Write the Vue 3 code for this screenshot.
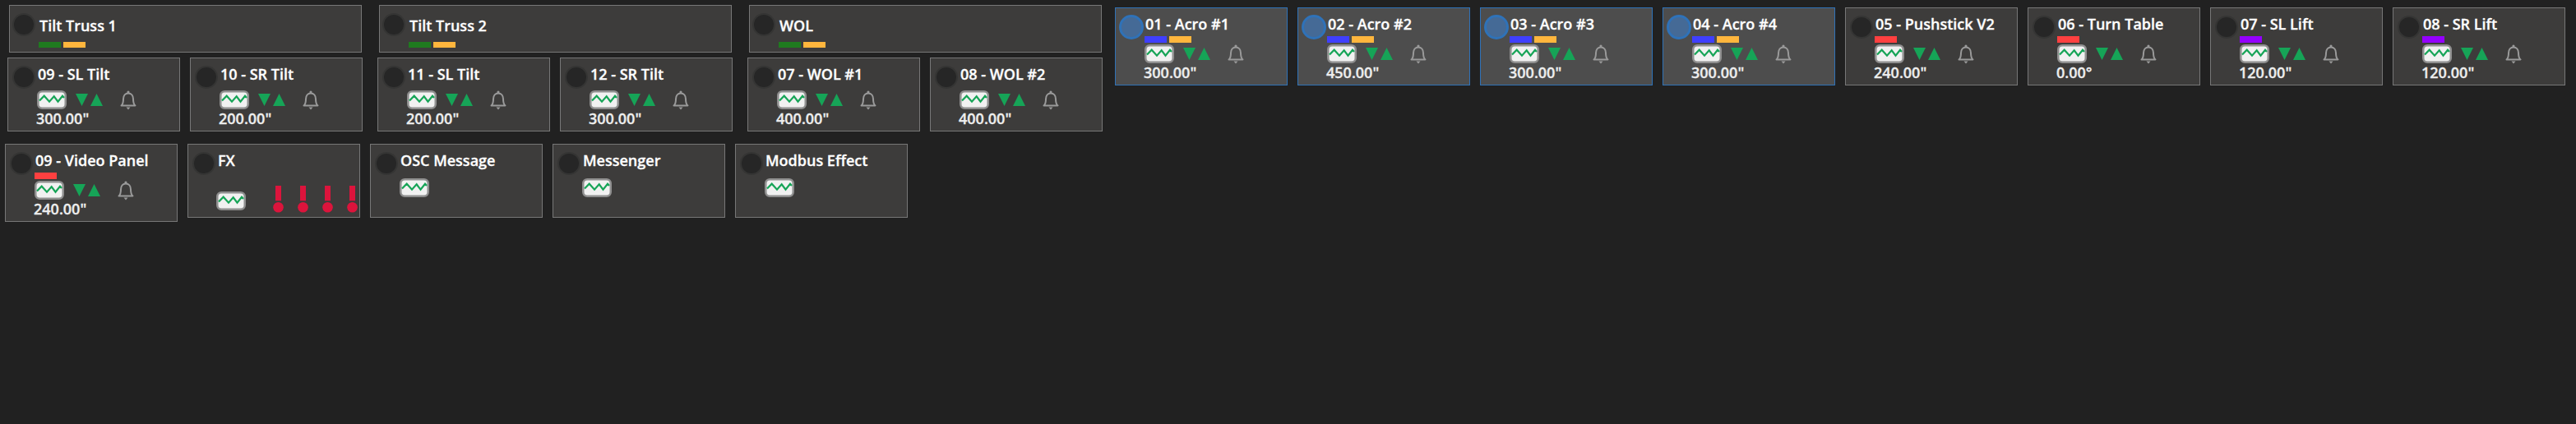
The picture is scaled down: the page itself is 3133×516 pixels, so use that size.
<template>
  <div class="board">
    <div class="row row--top">
      <div v-for="group in groups" :key="group.title" class="group">
        <FixtureCard class="card--wide" :item="group" />
        <div class="group__children">
          <FixtureCard v-for="child in group.children" :key="child.title" :item="child" />
        </div>
      </div>
      <div class="singles">
        <FixtureCard v-for="item in singles" :key="item.title" class="card--tall" :item="item" />
      </div>
    </div>
    <div class="row row--bottom">
      <FixtureCard v-for="item in effects" :key="item.title" :item="item" />
    </div>
  </div>
</template>

<script setup>
import { h } from 'vue'

const GREEN = '#1f7a1f'
const AMBER = '#ffb63d'
const BLUE = '#3f3fff'
const RED = '#ff4040'
const PURPLE = '#9400ff'

const motor = (title, value, tags = []) => ({ title, value, tags, controls: true })

const groups = [
  {
    title: 'Tilt Truss 1',
    tags: [GREEN, AMBER],
    children: [motor('09 - SL Tilt', '300.00"'), motor('10 - SR Tilt', '200.00"')],
  },
  {
    title: 'Tilt Truss 2',
    tags: [GREEN, AMBER],
    children: [motor('11 - SL Tilt', '200.00"'), motor('12 - SR Tilt', '300.00"')],
  },
  {
    title: 'WOL',
    tags: [GREEN, AMBER],
    children: [motor('07 - WOL #1', '400.00"'), motor('08 - WOL #2', '400.00"')],
  },
]

const singles = [
  { ...motor('01 - Acro #1', '300.00"', [BLUE, AMBER]), active: true },
  { ...motor('02 - Acro #2', '450.00"', [BLUE, AMBER]), active: true },
  { ...motor('03 - Acro #3', '300.00"', [BLUE, AMBER]), active: true },
  { ...motor('04 - Acro #4', '300.00"', [BLUE, AMBER]), active: true },
  motor('05 - Pushstick V2', '240.00"', [RED]),
  motor('06 - Turn Table', '0.00°', [RED]),
  motor('07 - SL Lift', '120.00"', [PURPLE]),
  motor('08 - SR Lift', '120.00"', [PURPLE]),
]

const effects = [
  motor('09 - Video Panel', '240.00"', [RED]),
  { title: 'FX', wave: true, alerts: 4 },
  { title: 'OSC Message', wave: true },
  { title: 'Messenger', wave: true },
  { title: 'Modbus Effect', wave: true },
]

// ── 图标 ──
const svg = (cls, w, hgt, children) =>
  h('svg', { class: cls, width: w, height: hgt, viewBox: `0 0 ${w} ${hgt}` }, children)

function WaveIcon() {
  return svg('wave', 36, 23, [
    h('rect', { x: 1.25, y: 1.25, width: 33.5, height: 20.5, rx: 5, fill: '#f1f1f1', stroke: '#8f8f8f', 'stroke-width': 2.5 }),
    h('path', {
      d: 'M3 12.5 L8.7 6.7 L15 13.7 L20.7 7.3 L25.5 13.7 L31 6.7 L33 9',
      fill: 'none',
      stroke: '#16a457',
      'stroke-width': 2.2,
    }),
  ])
}

function JogIcon() {
  return svg('jog', 34, 15, [
    h('path', { d: 'M0 0 H15 L7.5 15 Z', fill: '#16a457' }),
    h('path', { d: 'M18 15 H33 L25.5 0 Z', fill: '#16a457' }),
  ])
}

function BellIcon() {
  return svg('bell', 20, 24, [
    h('path', {
      d: 'M1.5 18.5 C4 16.5 4 14 4 10.5 C4 6.5 6.5 3.5 10 3.5 C13.5 3.5 16 6.5 16 10.5 C16 14 16 16.5 18.5 18.5 Z',
      fill: 'none',
      stroke: '#9a9a9a',
      'stroke-width': 2,
      'stroke-linejoin': 'round',
    }),
    h('circle', { cx: 10, cy: 2, r: 1.6, fill: '#9a9a9a' }),
    h('path', { d: 'M7.5 20.5 H12.5 L10 23.5 Z', fill: '#9a9a9a' }),
  ])
}

function AlertIcon() {
  return svg('alert', 13, 33, [
    h('rect', { x: 3, y: 0, width: 7, height: 18.3, fill: '#dc143c' }),
    h('circle', { cx: 6.5, cy: 26.2, r: 6.3, fill: '#dc143c' }),
  ])
}

// ── 卡片 ──
function FixtureCard(props) {
  const { item } = props
  const tags = (item.tags || []).map((color) =>
    h('span', { class: 'tag', style: { background: color } }),
  )
  const body = [
    h('span', { class: 'card__lamp' }),
    h('div', { class: 'card__title' }, item.title),
  ]
  if (tags.length) body.push(h('div', { class: 'card__tags' }, tags))
  if (item.controls) {
    body.push(
      h('div', { class: 'card__controls' }, [h(WaveIcon), h(JogIcon), h(BellIcon)]),
      h('div', { class: 'card__value' }, item.value),
    )
  } else if (item.wave) {
    const alerts = Array.from({ length: item.alerts || 0 }, () => h(AlertIcon))
    body.push(
      h('div', { class: ['card__status', { 'card__status--alerts': item.alerts }] }, [
        h(WaveIcon),
        ...alerts,
      ]),
    )
  }
  return h('div', { class: ['card', { 'card--active': item.active }] }, body)
}
FixtureCard.props = ['item']
</script>

<style>
html,
body {
  background: #212121;
}
</style>

<style scoped>
.board {
  width: 3133px;
  height: 516px;
  background: #212121;
  box-sizing: border-box;
  overflow: hidden;
  padding-top: 6px;
}

.row {
  display: flex;
  align-items: flex-start;
}

.row--top {
  padding-left: 9px;
  gap: 18px;
}

.row--bottom {
  margin-top: 15px;
  padding-left: 6px;
  gap: 12px;
}

.group {
  width: 432px;
  display: flex;
  flex-direction: column;
  gap: 6px;
}

.group__children {
  display: flex;
  gap: 12px;
}

.singles {
  display: flex;
  gap: 12px;
  margin-left: -3px;
  margin-top: 3px;
}

:deep(.card) {
  position: relative;
  box-sizing: border-box;
  width: 210px;
  height: 90px;
  padding: 7px 0 0 35px;
  background: #3d3c3b;
  border: 1px solid #777;
  font-family: 'Open Sans', 'Noto Sans', sans-serif;
  color: #fff;
}

:deep(.card--wide) {
  width: 429px;
  height: 58px;
  margin-left: 2px;
  padding-top: 12px;
}

:deep(.card--tall) {
  height: 95px;
}

.row--bottom :deep(.card:first-child) {
  height: 95px;
}

:deep(.card--active) {
  background: #4d4d4d;
  border-color: #2f72b8;
}

:deep(.card__lamp) {
  position: absolute;
  left: 7px;
  top: 11px;
  width: 24px;
  height: 24px;
  border-radius: 50%;
  background: #262626;
  box-shadow: 0 0 0 2px #353534;
}

:deep(.card--wide .card__lamp) {
  left: 5px;
}

:deep(.card--active .card__lamp) {
  left: 4px;
  top: 8px;
  background: #456a96;
  box-shadow: none;
  border: 3px solid #2f72b8;
}

:deep(.card__title) {
  font-size: 18px;
  font-weight: 600;
  line-height: 24px;
  white-space: nowrap;
  margin-left: 1px;
  -webkit-text-stroke: 0.3px currentColor;
}

:deep(.card__tags) {
  display: flex;
  gap: 3px;
  margin-top: 3px;
  height: 8px;
}

:deep(.card--wide .card__tags) {
  margin-top: 8px;
  height: 7px;
}

:deep(.tag) {
  width: 27px;
}

:deep(.card__controls) {
  display: flex;
  align-items: center;
  margin-top: 8px;
  height: 23px;
}

:deep(.card__tags + .card__controls) {
  margin-top: 2px;
}

:deep(.card__controls .jog) {
  margin-left: 11px;
}

:deep(.card__controls .bell) {
  margin-left: 20px;
}

:deep(.card__value) {
  font-size: 18px;
  font-weight: 600;
  line-height: 22px;
  margin-left: -1px;
  color: #eee;
  -webkit-text-stroke: 0.3px currentColor;
}

:deep(.card__status) {
  display: flex;
  margin-top: 10px;
}

:deep(.card__status--alerts) {
  align-items: center;
  margin: 19px 0 0 -1px;
  gap: 17px;
}

:deep(.card__status--alerts .wave) {
  margin: 3px 16px 0 0;
}
</style>
